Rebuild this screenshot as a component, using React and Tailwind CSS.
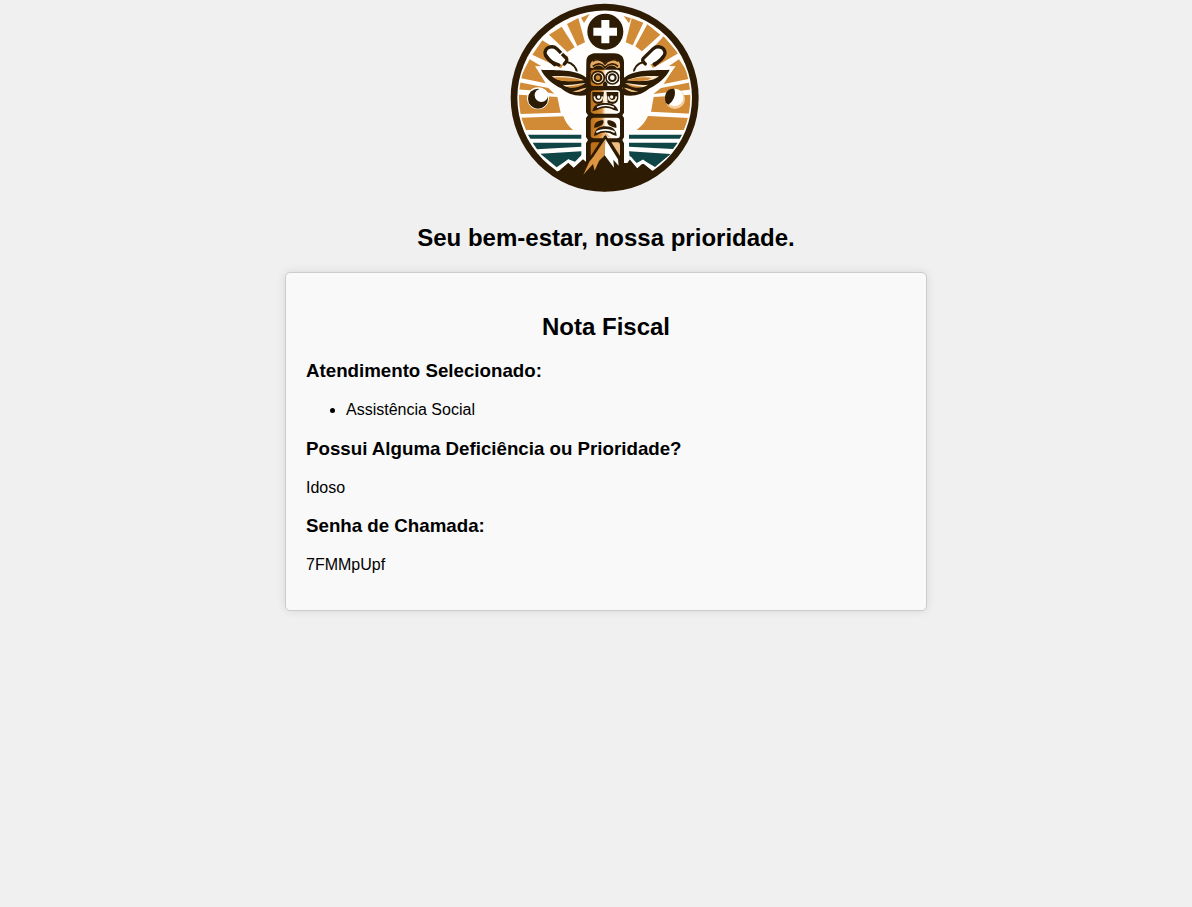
const DARK = '#2d1b03';
const ORANGE = '#d18a35';
const TEAL = '#0f4544';

function Logo() {
  return (
    <svg className="block h-[196px] w-[200px]" viewBox="0 0 600 588" role="img" aria-label="Totem">
      <defs>
        <clipPath id="disc">
          <circle cx="299" cy="293.5" r="257" />
        </clipPath>
        <clipPath id="outer">
          <circle cx="299" cy="293.5" r="280" />
        </clipPath>
        <linearGradient id="face" x1="0" x2="1">
          <stop offset="0" stopColor="#bd7018" />
          <stop offset="0.38" stopColor="#d9913c" />
          <stop offset="0.5" stopColor="#fff4e6" />
          <stop offset="1" stopColor="#ffffff" />
        </linearGradient>
      </defs>
      <circle cx="299" cy="293.5" r="282" fill={DARK} />
      <circle cx="299" cy="293.5" r="262" fill="#fffefc" />

      {/* sun rays */}
      <g clipPath="url(#disc)" fill={ORANGE}>
        <path d="M228 53L254 42L237 69Z" />
        <path d="M186 72L220 54L240 127L217 138Z" />
        <path d="M132 104L170 80L209 142L187 156Z" />
        <path d="M82 164L112 121L190 170L168 205Z" />
        <path d="M74 178L108 198L92 201L122 250L45 234Z" />
        <path d="M40 246L130 264L148 281L98 272L40 268Z" />
        <path d="M38 284L157 291L167 338L38 342Z" />
        <path d="M48 353L175 349C181 366 190 379 204 390L63 390Z" />
        <path d="M356 48L378 55L372 70Z" />
        <path d="M380 55L415 68L383 136L362 127Z" />
        <path d="M427 73L466 104L411 154L391 139Z" />
        <path d="M476 109L520 160L444 204L420 170Z" />
        <path d="M522 178L560 235L476 252L508 200L492 198Z" />
        <path d="M468 264L560 246L560 268L445 282Z" />
        <path d="M446 291L560 284L560 341L438 335Z" />
        <path d="M429 348L551 354L537 390L395 390C411 378 422 364 429 348Z" />
      </g>

      {/* water */}
      <g fill={TEAL}>
        <path d="M69 404H229V416H76Z" />
        <path d="M83 428H229V440L96 448Z" />
        <path d="M106 461L229 454V466L210 485L190 478L155 502Z" />
        <path d="M372 404H531L524 416H372Z" />
        <path d="M372 428H518L504 447L372 440Z" />
        <path d="M372 454L497 462L450 501L413 479L395 489L374 470Z" />
      </g>

      {/* medical cross */}
      <circle cx="301" cy="95" r="60" fill="#fffefc" />
      <circle cx="301" cy="95" r="54" fill={DARK} />
      <path d="M289 60H313V83H336V107H313V130H289V107H265V83H289Z" fill="#fff" />

      {/* capsules */}
      <g fill="none" stroke={DARK} strokeLinecap="round" strokeLinejoin="round">
        <path d="M124 163C118 145 138 136 153 146L184 175C190 182 178 194 168 194L142 188Z" fill="#fff" stroke="none" />
        <path d="M149 194C132 180 119 170 120 158C122 139 144 136 155 146L184 175C188 180 183 187 178 192" strokeWidth="10" />
        <path d="M124 167C133 183 143 188 162 195" strokeWidth="9" />
        <path d="M156 173L172 158" stroke="#fff" strokeWidth="4" />
        <path d="M184 185C203 190 215 202 216 220" strokeWidth="6" />
        <path d="M476 163C482 145 462 136 446 146L415 175C409 182 421 194 431 194L458 188Z" fill="#fff" stroke="none" />
        <path d="M450 194C466 180 481 170 480 158C478 139 456 136 445 146L415 175C411 180 415 187 421 192" strokeWidth="10" />
        <path d="M476 168C468 182 458 188 447 192" strokeWidth="9" />
        <path d="M415 186C397 191 387 202 386 220" strokeWidth="6" />
      </g>

      {/* wings */}
      <g>
        <path d="M90 198C145 205 207 202 249 229V290C201 300 156 278 125 248Z" fill="#fffefc" />
        <path d="M108 209C154 212 210 204 249 236V284C220 293 188 283 168 265C143 252 119 233 108 209Z" fill={DARK} />
        <path d="M140 229C172 226 212 229 237 241C204 242 166 250 140 229Z" fill="#ffe9cc" />
        <path d="M145 232C170 231 205 231 234 242C200 244 165 249 145 232Z" fill={ORANGE} />
        <path d="M173 254C194 257 218 251 242 249C222 260 192 269 173 254Z" fill="#ffe7c6" />
        <path d="M182 258C204 261 218 253 239 251C221 263 199 268 182 258Z" fill={ORANGE} />
        <path d="M202 273C217 273 228 265 245 263C235 273 216 280 202 273Z" fill="#f5c58b" />
      </g>
      <g transform="translate(602 0) scale(-1 1)">
        <path d="M90 198C145 205 207 202 249 229V290C201 300 156 278 125 248Z" fill="#fffefc" />
        <path d="M108 209C154 212 210 204 249 236V284C220 293 188 283 168 265C143 252 119 233 108 209Z" fill={DARK} />
        <path d="M140 229C172 226 212 229 237 241C204 242 166 250 140 229Z" fill="#ffe9cc" />
        <path d="M162 234C184 230 210 232 235 241C207 244 180 247 162 234Z" fill={ORANGE} />
        <path d="M173 254C194 257 218 251 242 249C222 260 192 269 173 254Z" fill="#ffe7c6" />
        <path d="M188 259C207 262 220 253 239 251C223 263 204 267 188 259Z" fill={ORANGE} />
        <path d="M202 273C217 273 228 265 245 263C235 273 216 280 202 273Z" fill="#f5c58b" />
      </g>

      {/* moons */}
      <circle cx="99" cy="295" r="33" fill="#fff" />
      <circle cx="99" cy="296" r="30" fill={DARK} />
      <circle cx="109" cy="286" r="20" fill="#fff" />
      <circle cx="510" cy="297" r="30" fill="#f7cf9f" />
      <circle cx="509" cy="292" r="26" fill="#fff" />
      <path d="M482 308C474 281 490 263 508 267C514 285 505 304 490 314Z" fill={DARK} />

      {/* totem */}
      <path d="M244 185C244 165 259 160 275 160H327C344 160 357 168 357 187V257L352 264L357 274V338L352 346L357 354V412L352 420L357 430V500H243V430L249 420L243 411V354L249 346L243 337V274L249 264L243 257Z" fill={DARK} />
      <rect x="257" y="209" width="88" height="49" rx="9" fill="url(#face)" />
      <path d="M256 203C252 174 285 174 300 188C316 174 350 174 345 203L336 205C326 192 309 194 300 208C290 194 274 192 264 205Z" fill="#e8aa62" />
      <path d="M263 184C279 174 294 182 300 192C307 182 325 174 339 184M263 199C280 187 292 191 300 203C310 191 326 187 339 199" fill="none" stroke={DARK} strokeWidth="5" />
      <circle cx="279" cy="233" r="19" fill="#ffe0b8" stroke={DARK} strokeWidth="5" />
      <circle cx="322" cy="233" r="19" fill="#fff" stroke={DARK} strokeWidth="5" />
      <circle cx="279" cy="233" r="10" fill={ORANGE} stroke={DARK} strokeWidth="6" />
      <circle cx="322" cy="233" r="10" fill="#fff" stroke={DARK} strokeWidth="6" />
      <path d="M294 250L300 243L307 250V258H294Z" fill={DARK} />

      <rect x="257" y="271" width="88" height="70" rx="10" fill="url(#face)" />
      <path d="M262 276H340V294C337 318 313 315 300 301C288 316 263 316 262 294Z" fill={DARK} />
      <path d="M268 289C269 307 291 307 292 289M310 289C311 307 333 307 334 289" fill="none" stroke="#fff0dc" strokeWidth="5" />
      <circle cx="281" cy="291" r="5" fill="#fff" />
      <circle cx="320" cy="291" r="5" fill="#fff" />
      <path d="M297 273H304L308 305H293Z" fill="#fff0db" />
      <path d="M262 334C266 311 285 309 300 309C317 309 335 312 340 334L326 330C309 321 292 321 275 331Z" fill={DARK} />
      <path d="M276 322C293 314 310 314 327 322" fill="none" stroke="#fff" strokeWidth="4" />

      <rect x="257" y="353" width="88" height="62" rx="10" fill="url(#face)" />
      <path d="M268 384C265 366 284 360 295 361C300 375 282 381 268 384ZM334 384C338 366 319 360 308 361C302 375 320 381 334 384Z" fill={DARK} />
      <path d="M267 408C270 384 286 379 301 379C321 379 334 388 335 408L325 405C310 395 291 395 276 405Z" fill={DARK} />
      <path d="M274 397C287 387 315 387 329 397" fill="none" stroke="#fff" strokeWidth="5" />
      <path d="M257 434Q257 427 264 427H284L257 468Z" fill="#bd7018" />
      <path d="M345 434Q345 427 338 427H319L345 468Z" fill="#f0bd82" />

      {/* mountains */}
      <g clipPath="url(#outer)">
        <path d="M136 514L157 514L190 486L207 502L233 477L250 491L301 402L350 489L367 489L375 478L397 503L413 489L446 514L460 517L430 580H170Z" fill={DARK} />
        <path d="M154 511L161 508L190 483L206 498L234 472M368 472L376 474L397 499L414 484L444 509" fill="none" stroke="#fff" strokeWidth="8" />
      </g>
      <path d="M301 417L299 466L282 483L269 512L264 492L235 524L253 485L265 470Z" fill="#dc9542" />
      <path d="M301 417L339 478L341 497L325 479L327 503L299 466Z" fill="#fff" />
      <path d="M283 415L301 397L319 415L301 406Z" fill="#e9b273" />
    </svg>
  );
}

export default function App() {
  return (
    <div className="flex min-h-screen flex-col items-center bg-[#f0f0f0] pl-5 font-['Liberation_Sans',Arial,sans-serif] text-base text-black">
      <div className="mr-0.5">
        <Logo />
      </div>
      <h2 className="mt-7 text-2xl leading-7 font-bold">Seu bem-estar, nossa prioridade.</h2>
      <main className="mt-5 h-[339px] w-[642px] rounded-[5px] border border-[#ccc] bg-[#f9f9f9] p-5 shadow-[0_0_10px_rgba(0,0,0,0.1)]">
        <h2 className="mt-5 text-center text-2xl leading-7 font-bold">Nota Fiscal</h2>
        <h3 className="mt-[19px] text-[18.72px] leading-[22px] font-bold">Atendimento Selecionado:</h3>
        <ul className="mt-[19px] list-disc pl-10 leading-[18px]">
          <li>Assistência Social</li>
        </ul>
        <h3 className="mt-[19px] text-[18.72px] leading-[22px] font-bold">Possui Alguma Deficiência ou Prioridade?</h3>
        <p className="mt-[19px] leading-[18px]">Idoso</p>
        <h3 className="mt-[18px] text-[18.72px] leading-[22px] font-bold">Senha de Chamada:</h3>
        <p className="mt-[19px] leading-[18px]">7FMMpUpf</p>
      </main>
    </div>
  );
}
